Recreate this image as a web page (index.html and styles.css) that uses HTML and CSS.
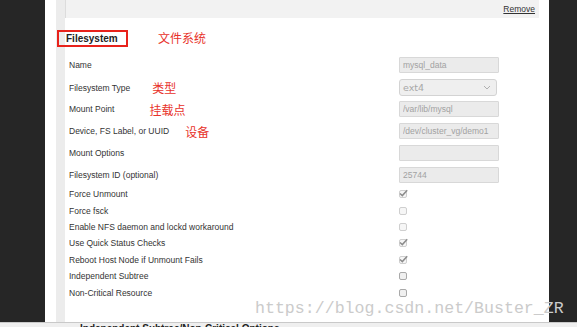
FILE: index.html
```html
<!DOCTYPE html>
<html lang="en">
<head>
  <meta charset="UTF-8">
  <meta name="viewport" content="width=device-width, initial-scale=1.0">
  <title>Filesystem Resource</title>
  <link rel="stylesheet" href="styles.css">
</head>
<body>
  <div class="screen">
    <div class="side-left"></div>

    <div class="page">
      <div class="panel">
        <div class="prev-box"><a class="remove" href="#">Remove</a></div>

        <div class="section-head">
          <h3 class="section-title">Filesystem</h3>
          <span class="note note-head">文件系统</span>
        </div>

        <div class="fields">
          <div class="field">
            <span class="label">Name</span>
            <input class="text-input" type="text" value="mysql_data" disabled>
          </div>
          <div class="field">
            <span class="label">Filesystem Type<span class="note note-type">类型</span></span>
            <div class="select">ext4
              <svg class="chevron" width="8" height="5" viewBox="0 0 8 5"><path d="M1 1 L4 4 L7 1" fill="none" stroke="#b0b0b0" stroke-width="1"/></svg>
            </div>
          </div>
          <div class="field">
            <span class="label">Mount Point<span class="note note-mount">挂载点</span></span>
            <input class="text-input" type="text" value="/var/lib/mysql" disabled>
          </div>
          <div class="field">
            <span class="label">Device, FS Label, or UUID<span class="note note-device">设备</span></span>
            <input class="text-input" type="text" value="/dev/cluster_vg/demo1" disabled>
          </div>
          <div class="field">
            <span class="label">Mount Options</span>
            <input class="text-input" type="text" value="" disabled>
          </div>
          <div class="field">
            <span class="label">Filesystem ID (optional)</span>
            <input class="text-input" type="text" value="25744" disabled>
          </div>
        </div>

        <div class="checks">
          <div class="check-row">
            <span class="label">Force Unmount</span>
            <span class="box checked"><svg width="9" height="8" viewBox="0 0 9 8"><path d="M1 4.5 L3.3 6.6 L8.2 1.2" fill="none" stroke="#8c8c8c" stroke-width="1.5"/></svg></span>
          </div>
          <div class="check-row">
            <span class="label">Force fsck</span>
            <span class="box"></span>
          </div>
          <div class="check-row">
            <span class="label">Enable NFS daemon and lockd workaround</span>
            <span class="box"></span>
          </div>
          <div class="check-row">
            <span class="label">Use Quick Status Checks</span>
            <span class="box checked"><svg width="9" height="8" viewBox="0 0 9 8"><path d="M1 4.5 L3.3 6.6 L8.2 1.2" fill="none" stroke="#8c8c8c" stroke-width="1.5"/></svg></span>
          </div>
          <div class="check-row">
            <span class="label">Reboot Host Node if Unmount Fails</span>
            <span class="box checked"><svg width="9" height="8" viewBox="0 0 9 8"><path d="M1 4.5 L3.3 6.6 L8.2 1.2" fill="none" stroke="#8c8c8c" stroke-width="1.5"/></svg></span>
          </div>
          <div class="check-row">
            <span class="label">Independent Subtree</span>
            <span class="box dark"></span>
          </div>
          <div class="check-row">
            <span class="label">Non-Critical Resource</span>
            <span class="box dark"></span>
          </div>
        </div>

        <h4 class="sub-title">Independent Subtree/Non-Critical Options</h4>
      </div>
    </div>

    <div class="side-right"></div>

    <div class="watermark">https://blog.csdn.net/Buster_ZR</div>
    <div class="bottom-edge"></div>
  </div>
</body>
</html>
```

FILE: styles.css
```css
body {
  margin: 0;
  padding: 0;
  background-color: #262626;
  font-family: "Liberation Sans", Arial, sans-serif;
  height: 327px;
  overflow: hidden;
}
.screen {
  position: relative;
  display: flex;
  height: 327px;
}
.side-left {
  flex: none;
  width: 45px;
  background-color: #262626;
}
.side-right {
  flex: 1;
  background-color: #262626;
}
.page {
  flex: none;
  width: 504px;
  box-sizing: border-box;
  padding: 0 10px 0 11px;
  background-color: #fff;
}
.panel {
  height: 100%;
  border-left: 9px solid #ececec;
}
.prev-box {
  height: 18px;
  box-sizing: border-box;
  background-color: #f2f2f2;
  border-left: 1px solid #dcdcdc;
  display: flex;
  justify-content: flex-end;
  align-items: flex-end;
  padding: 0 4px 4px 0;
}
.remove {
  font-size: 8.5px;
  line-height: 9px;
  color: #333;
  text-decoration: underline;
}

/* section header with the red annotation box */
.section-head {
  display: flex;
  align-items: center;
  margin-top: 12px;
  height: 17px;
}
.section-title {
  margin: 0 0 0 -8px;
  width: 71px;
  height: 17px;
  box-sizing: border-box;
  border: 2px solid #e8221b;
  padding-left: 7px;
  font-size: 10px;
  line-height: 13px;
  font-weight: bold;
  color: #222;
}
.note {
  font-family: "Noto Sans CJK SC", sans-serif;
  font-size: 12px;
  line-height: 13px;
  color: #e8322a;
}
.note-head {
  margin-left: 30px;
  margin-top: -3px;
}
.note-type {
  margin-left: 22px;
}
.note-mount {
  margin-left: 35px;
}
.note-device {
  margin-left: 16px;
}

/* text fields */
.fields {
  display: flex;
  flex-direction: column;
  gap: 6px;
  margin-top: 10px;
  padding-left: 4px;
}
.field {
  display: grid;
  grid-template-columns: 330px 100px;
  align-items: center;
  height: 16px;
}
.label {
  display: flex;
  align-items: center;
  font-size: 8.5px;
  color: #333;
}
.text-input {
  width: 100px;
  height: 16px;
  box-sizing: border-box;
  margin: 0;
  padding: 0 3px;
  border: 1px solid #d8d8d8;
  border-radius: 1px;
  background-color: #ebebeb;
  font-family: "Liberation Sans", Arial, sans-serif;
  font-size: 8.5px;
  color: #a2a2a2;
}
.select {
  width: 98px;
  height: 17px;
  box-sizing: border-box;
  display: flex;
  align-items: center;
  justify-content: space-between;
  padding: 0 5px 0 3px;
  border: 1px solid #d3d3d3;
  border-radius: 3px;
  background-color: #efefef;
  font-family: "DejaVu Sans", sans-serif;
  font-size: 9.5px;
  color: #a8a8a8;
}

/* checkbox rows */
.checks {
  margin-top: 3px;
  padding-left: 4px;
}
.check-row {
  display: grid;
  grid-template-columns: 330px 100px;
  align-items: center;
  height: 16.4px;
}
.box {
  position: relative;
  width: 8px;
  height: 8px;
  box-sizing: border-box;
  border: 1px solid #cfcfcf;
  border-radius: 2px;
  background-color: #f6f6f6;
}
.box.dark {
  border-color: #a9a9a9;
  background-color: #f0f0f0;
}
.box.checked svg {
  position: absolute;
  left: -1px;
  top: -2px;
}
.sub-title {
  position: relative;
  z-index: 2;
  margin: 22px 0 0 15px;
  font-size: 10px;
  font-weight: bold;
  color: #222;
}

/* overlays */
.watermark {
  position: absolute;
  left: 255px;
  top: 299px;
  font-family: "Liberation Mono", "DejaVu Sans Mono", monospace;
  font-size: 16.6px;
  color: #cbcbcb;
  white-space: nowrap;
}
.bottom-edge {
  position: absolute;
  left: 0;
  right: 0;
  bottom: 0;
  height: 4px;
  border-top: 1px solid #c9c9c9;
  background-color: #efefef;
}
```
